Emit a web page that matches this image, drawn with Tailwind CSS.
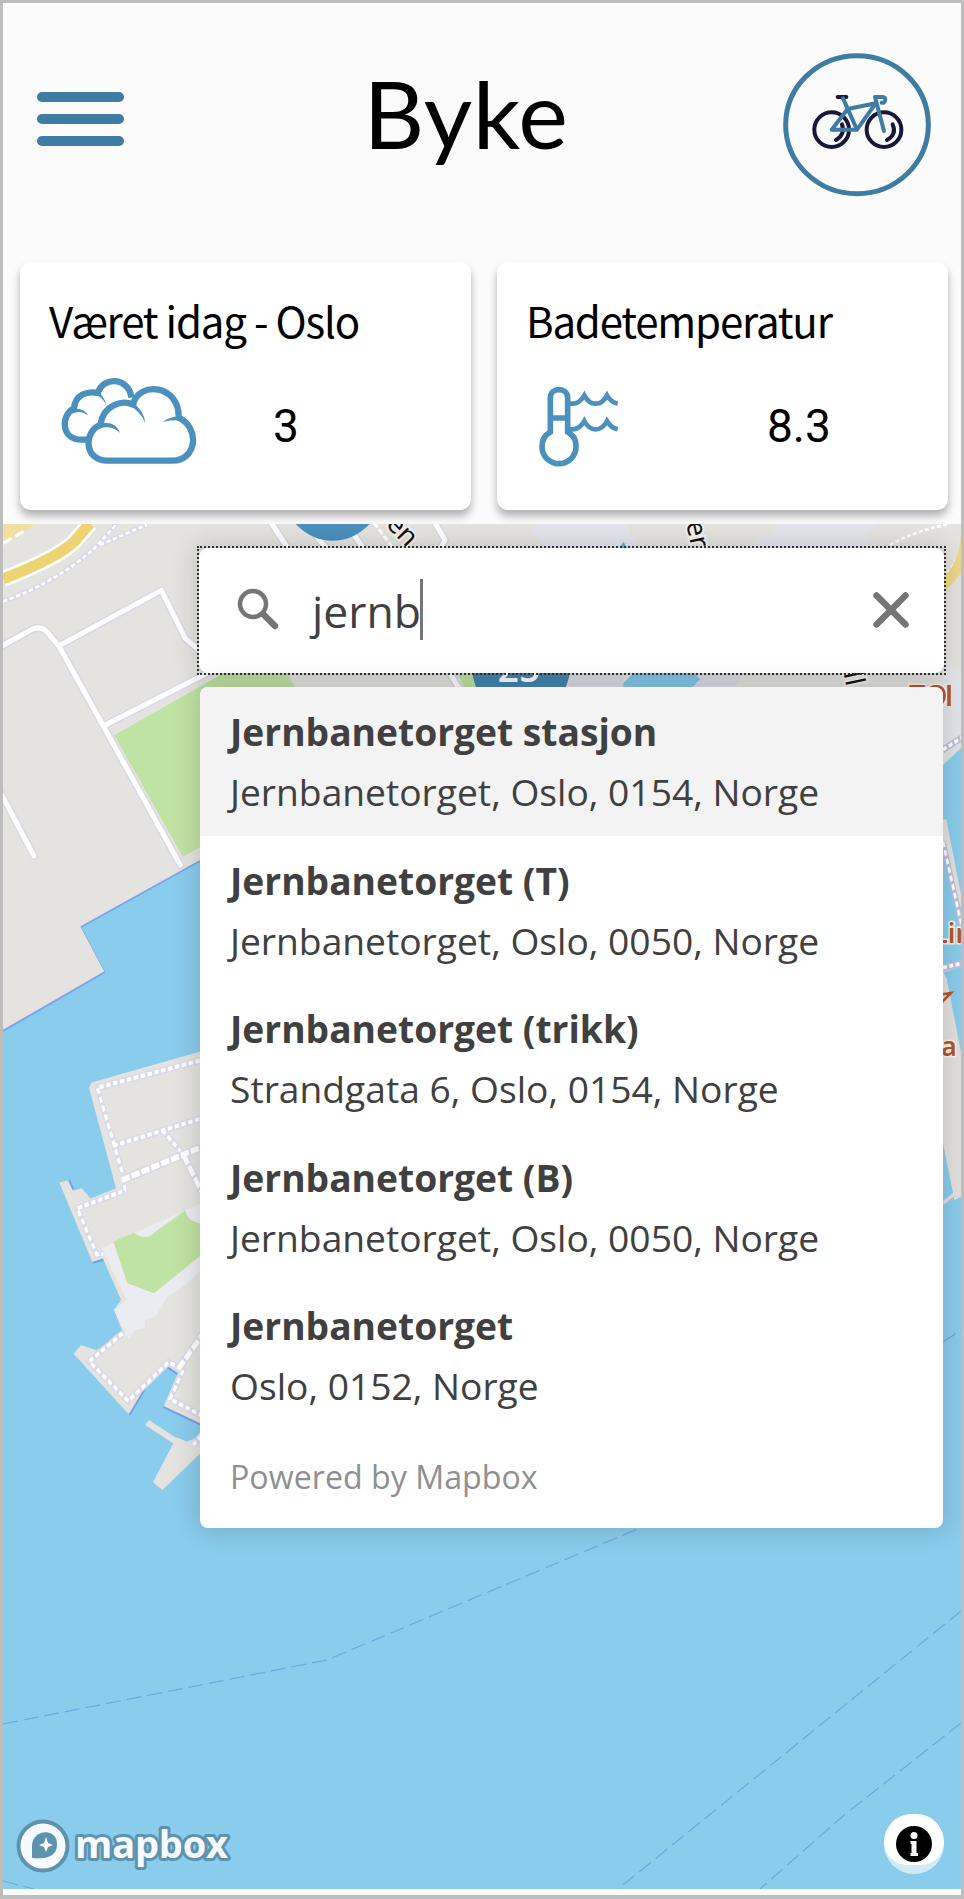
<!DOCTYPE html>
<html lang="no">
<head>
<meta charset="utf-8">
<title>Byke</title>
<script src="https://cdn.jsdelivr.net/npm/@tailwindcss/browser@4"></script>
</head>
<body class="bg-[#bdbdbd]">
<main class="flex h-[1899px] w-[964px] flex-col border-x-[3px] border-t-[3px] border-b-4 border-[#bdbdbd] bg-[#fbfbfb] text-black">
  <header class="flex h-[259px] shrink-0 items-start justify-between pl-[34px] pr-[29px]">
    <button class="mt-[89px] flex w-[87px] flex-col gap-[12px]" aria-label="Meny">
      <span class="h-[10px] w-full rounded-full bg-[#3e7ca3]"></span>
      <span class="h-[10px] w-full rounded-full bg-[#3e7ca3]"></span>
      <span class="h-[10px] w-full rounded-full bg-[#3e7ca3]"></span>
    </button>
    <h1 class="mt-[50px] ml-[26px] font-[Lato] text-[94px] leading-[120px] tracking-[0.5px]">Byke</h1>
    <svg class="mt-[49px] h-[146px] w-[150px]" viewBox="125 95 450 438" fill="none" stroke-linecap="round" stroke-linejoin="round">
      <ellipse cx="350" cy="313" rx="214" ry="207" stroke="#3e7ca3" stroke-width="15"/>
      <g stroke="#17173a" stroke-width="12">
        <circle cx="274" cy="328" r="52"/><circle cx="431" cy="328" r="52"/>
        <path d="M305 312Q315 342 287 359M457 312Q470 342 440 359"/>
        <path d="M292 230H318"/>
      </g>
      <g stroke="#3e7ca3" stroke-width="12">
        <path d="M308 234L350 328H274L322 266L406 249L350 328M431 332L404 230H426Q438 230 434 242Q432 248 424 247"/>
      </g>
    </svg>
  </header>

  <section class="flex h-[262px] shrink-0 gap-[26px] pr-[13px] pl-[17px]">
    <article class="h-[248px] flex-1 rounded-[11px] bg-white pl-[29px] shadow-[0_6px_9px_rgba(0,0,0,0.3)]">
      <h2 class="mt-[28px] font-['Noto_Sans_CJK_JP'] text-[42px] leading-[60px] tracking-[-1.2px] whitespace-nowrap">Været idag - Oslo</h2>
      <div class="mt-[26px] flex">
        <svg class="ml-[12px] h-[90px] w-[136px]" viewBox="180 375 408 270" fill="none" stroke="#4b91bd" stroke-width="19" stroke-linejoin="round">
          <path d="M262 566H243C176 566 181 490 219 472C223 430 259 419 291 426C306 373 385 380 391 440"/>
          <path d="M320 629C247 629 248 540 298 522C307 460 366 446 396 461C413 388 536 401 533 500C598 530 588 629 514 629Z"/>
          <g fill="#4b91bd" stroke="none">
            <path d="M284 417Q309 432 316 462Q300 432 280 431ZM217 474Q249 470 261 494Q239 475 214 488ZM300 516Q345 509 357 546Q331 520 294 533ZM393 454Q430 477 433 518Q419 479 383 463ZM540 496Q502 498 485 513Q515 505 543 510Z"/>
          </g>
        </svg>
        <span class="mt-[20px] ml-[76px] font-[Roboto] text-[46px] leading-[60px]">3</span>
      </div>
    </article>
    <article class="h-[248px] flex-1 rounded-[11px] bg-white pl-[29px] shadow-[0_6px_9px_rgba(0,0,0,0.3)]">
      <h2 class="mt-[28px] font-['Noto_Sans_CJK_JP'] text-[42px] leading-[60px] tracking-[-1.2px] whitespace-nowrap">Badetemperatur</h2>
      <div class="mt-[26px] flex">
        <svg class="mt-[8px] ml-[11px] h-[84px] w-[82px]" viewBox="170 402 246 252" fill="none" stroke="#4b91bd" stroke-width="17">
          <path d="M210 546V443C210 411 262 411 262 443V546C286 560 287 576 287 590A51 51 0 0 1 185 590C185 570 192 556 210 546ZM210 504H262"/>
          <path d="M264 461H276Q298 461 312 436Q325 461 346 461Q367 461 380 436Q392 457 412 461M264 538H276Q298 538 312 513Q325 538 346 538Q367 538 380 513Q392 534 412 538" stroke-width="14"/>
        </svg>
        <span class="mt-[20px] ml-[148px] font-[Roboto] text-[46px] leading-[60px]">8.3</span>
      </div>
    </article>
  </section>

  <section class="relative h-[1365px] shrink-0 overflow-hidden bg-[#8accec]">
    <svg class="absolute inset-0 h-full w-full" viewBox="3 524 958 1365" fill="none">
      <!-- northern land -->
      <path d="M3 524H961V748L943 765V700H300V820L200 861L81 927L105 972L3 1031Z" fill="#e4e3df"/>
      <path d="M200 861L81 927M105 972L3 1031" stroke="#7aa5ec" stroke-width="2"/>
      <path d="M81 927L105 972" stroke="#8aaeeb" stroke-width="1"/>
      <g transform="translate(0 510) scale(.33333)">
        <path d="M343 676L670 490H862L900 560L600 1012L548 1040Z" fill="#bfe3a3"/>
        <path d="M9 42H104L60 75L9 100Z" fill="#f0dfa0"/>
        <path d="M9 100L70 65" stroke="#fff" stroke-width="9" stroke-dasharray="30 12"/>
        <path d="M9 207Q180 140 225 92L270 40" stroke="#fff" stroke-width="48"/>
        <path d="M9 207Q180 140 225 92L270 40" stroke="#edd374" stroke-width="33"/>
        <path d="M9 275Q170 215 280 118L350 42M300 105L440 44" stroke="#d9d9e8" stroke-width="15"/>
        <path d="M9 275Q170 215 280 118L350 42M300 105L440 44" stroke="#fff" stroke-width="8" stroke-dasharray="13 8"/>
        <g stroke-linejoin="round" stroke-linecap="round">
          <path d="M0 411L96 358Q125 345 145 370L178 410L310 648L541 1065M178 407L484 241L556 385L620 440M310 648L640 480M0 845L102 1038M808 30L870 125M1045 50L1090 115M1300 30L1335 90L1325 110M950 80L975 110M1350 490L1380 540" stroke="#d8d8e7" stroke-width="24"/>
          <path d="M0 411L96 358Q125 345 145 370L178 410L310 648L541 1065M178 407L484 241L556 385L620 440M310 648L640 480M0 845L102 1038M808 30L870 125M1045 50L1090 115M1300 30L1335 90L1325 110M950 80L975 110M1350 490L1380 540" stroke="#fff" stroke-width="15"/>
          <path d="M1125 42L1180 115" stroke="#fff" stroke-width="9" stroke-dasharray="10 14"/>
        </g>
        <circle cx="998" cy="-55" r="147" fill="#4b90bd"/>
        <path d="M1372 490H1440V535H1395Z" fill="#bfe3a3"/>
        <!-- squares and blocks in the centre -->
        <g transform="translate(1470 0)">
          <path d="M150 42H410L440 115H170L117 62ZM870 42H1160L1128 78L1160 115H770ZM1370 460L1422 500V680L1360 720V490Z" fill="#e4e5ec"/>
          <path d="M1200 105Q1280 60 1380 42M1422 95Q1405 150 1365 200" stroke="#fff" stroke-width="8" stroke-dasharray="12 7"/>
          <path d="M1428 80Q1422 175 1358 225" stroke="#edd98c" stroke-width="32"/>
          <path d="M400 95L412 115H388Z" fill="#62b5dd"/>
          <path d="M240 490H400V535H235ZM630 490H760L735 535H610Z" fill="#dcdde5"/>
          <path d="M430 490H615L630 508L605 535H400V520Z" fill="#84c8e9"/>
        </g>
      </g>
      <circle cx="521" cy="667" r="49" fill="#4386b2"/>
      <text x="519" y="682" text-anchor="middle" font-family="Open Sans" font-weight="600" font-size="37" fill="#fff">25</text>
      <g font-family="Noto Sans" font-size="27" fill="#111" stroke="#f5f2ec" stroke-width="4" paint-order="stroke">
        <text transform="translate(385 525) rotate(46)">en</text>
        <text transform="translate(686 523) rotate(78)">er</text>
        <text transform="translate(840 657) rotate(78)">ull</text>
      </g>
      <g font-family="Noto Sans" font-size="29" font-weight="500" fill="#b4572b" stroke="#f8f6f1" stroke-width="3" paint-order="stroke">
        <text x="909" y="706">TO</text><path d="M949 685V706" stroke="#b4572b" stroke-width="3.5"/>
      </g>
      <!-- eastern piers -->
      <g transform="translate(900 660) scale(.33333 .47187)">
        <path d="M129 338H139L184 500V530L129 385ZM129 648L184 636V650L129 662ZM129 660L140 675L184 835V1137L163 1145L160 1132L129 1024Z" fill="#e2e1dd"/>
        <path d="M129 190L184 165M129 385L184 560M129 652L184 643" stroke="#bebfdc" stroke-width="15"/>
        <path d="M129 190L184 165M129 385L184 560M129 652L184 643" stroke="#fff" stroke-width="8" stroke-dasharray="12 7"/>
        <path d="M163 1132L129 1151" stroke="#e2e1dd" stroke-width="8"/>
      </g>
      <g font-family="Noto Sans" font-size="27" font-weight="600" fill="#b4572b" stroke="#f8f6f1" stroke-width="3" paint-order="stroke">
        <text x="933" y="943">Lin</text><text x="941" y="1056">a</text>
        <path d="M937 995L951 993L939 1005" fill="none" stroke="#b4572b" stroke-width="2.5"/>
      </g>
      <!-- western peninsula -->
      <g transform="translate(0 840) scale(.33333 .44643)">
        <path d="M620 470L275 543L267 555L348 780L272 803L245 780L222 785L207 762L178 767L278 947L310 940L363 1030L342 1053L370 1105L290 1143L243 1131L221 1151L388 1288L440 1220L500 1180L533 1195L490 1270L620 1316Z" fill="#e4e3df"/>
        <path d="M435 1310L447 1299L525 1338L538 1340L560 1348L620 1330V1360L487 1456L459 1438L520 1352Z" fill="#e4e3df"/>
        <path d="M338 902L305 915L380 1030L342 1053L385 1118L405 1098L435 1093L434 1078L468 1066L500 1025L550 1000L620 952V810L555 830L450 865Z" fill="#ebecf1"/>
        <path d="M340 900L400 880Q440 900 465 878L555 830Q565 860 620 860V920L462 1015L382 993Z" fill="#bfe3a3"/>
        <path d="M207 762L220 783M278 947L310 940M388 1288L435 1230M500 1180L532 1196M490 1270L620 1316" stroke="#70a0e6" stroke-width="5"/>
        <path d="M620 490L292 555L373 760L375 785L232 825L290 928L310 928M340 685L620 620M487 650L550 705M368 1105L268 1168L385 1257L505 1170L550 1187L510 1252L620 1295M620 1320L580 1355" stroke="#dadae8" stroke-width="16"/>
        <path d="M620 490L292 555L373 760L375 785L232 825L290 928L310 928M340 685L620 620M487 650L550 705M368 1105L268 1168L385 1257L505 1170L550 1187L510 1252L620 1295M620 1320L580 1355" stroke="#fff" stroke-width="9" stroke-dasharray="13 8"/>
        <path d="M365 762L620 683M550 705L610 795M535 1185L620 1095" stroke="#d9d9e8" stroke-width="20"/>
        <path d="M365 762L620 683M550 705L610 795M535 1185L620 1095" stroke="#fff" stroke-width="13" stroke-dasharray="25 6"/>
      </g>
      <path d="M3 1724L327 1660L640 1528M961 1611L618 1889M961 1723L843 1816L760 1889M3 1881L34 1889M943 1342L961 1330" stroke="#6fa6df" stroke-width="1.2" stroke-dasharray="15 6"/>
    </svg>

    <div class="relative ml-[194px] mt-[22px] w-[749px]">
      <div class="h-[129px] border-[2px] border-dotted border-[#333]">
        <div class="flex h-full items-center rounded-[9px] bg-white shadow-[0_0_24px_5px_rgba(0,0,0,0.13)]">
          <svg class="mt-[-3px] ml-[38px] h-[42px] w-[42px]" viewBox="0 0 42 42" fill="none" stroke="#757575" stroke-linecap="round"><circle cx="16" cy="16" r="13" stroke-width="4.5"/><path d="M26 26L38 38" stroke-width="6.5"/></svg>
          <span class="ml-[33px] font-['Open_Sans'] text-[44.5px] leading-[60px] text-[#404040]">jernb</span>
          <span class="mt-[-2px] ml-[-1px] h-[61px] w-[3px] bg-[#757575]"></span>
          <svg class="mr-[35px] mb-[2px] ml-auto h-[36px] w-[36px]" viewBox="0 0 36 36" fill="none" stroke="#757575" stroke-width="6.5" stroke-linecap="round"><path d="M3.5 3.5L32.5 32.5M32.5 3.5L3.5 32.5"/></svg>
        </div>
      </div>
      <div class="mt-[12px] ml-[3px] h-[841px] w-[743px] overflow-hidden rounded-[8px] bg-white font-['Open_Sans'] text-[37.2px] text-[#404040] shadow-[0_0_24px_5px_rgba(0,0,0,0.13)]">
        <ul class="leading-[60px] whitespace-nowrap">
          <li class="h-[148.6px] bg-[#f3f3f3] px-[30px] pt-[15px]"><div class="font-bold">Jernbanetorget stasjon</div><div>Jernbanetorget, Oslo, 0154, Norge</div></li>
          <li class="h-[148.6px] px-[30px] pt-[15px]"><div class="font-bold">Jernbanetorget (T)</div><div>Jernbanetorget, Oslo, 0050, Norge</div></li>
          <li class="h-[148.6px] px-[30px] pt-[15px]"><div class="font-bold">Jernbanetorget (trikk)</div><div>Strandgata 6, Oslo, 0154, Norge</div></li>
          <li class="h-[148.6px] px-[30px] pt-[15px]"><div class="font-bold">Jernbanetorget (B)</div><div>Jernbanetorget, Oslo, 0050, Norge</div></li>
          <li class="h-[148.6px] px-[30px] pt-[15px]"><div class="font-bold">Jernbanetorget</div><div>Oslo, 0152, Norge</div></li>
        </ul>
        <p class="mt-[17px] px-[30px] text-[32.2px] leading-[60px] text-[#909090]">Powered by Mapbox</p>
      </div>
    </div>

    <div class="absolute bottom-[15px] left-[12px] flex">
      <svg class="h-[56px] w-[222px]" viewBox="15 1817 222 56">
        <circle cx="43" cy="1845" r="24.5" fill="#f4faff" stroke="#5f93ad" stroke-width="4"/>
        <path d="M32 1857V1845C32 1828 57 1826 57 1843C57 1857 44 1858 32 1857Z" fill="#5d93ad"/>
        <path d="M46 1836L48 1842L53 1844L48 1846L46 1851L44 1846L39 1844L44 1842Z" fill="#fff"/>
        <text x="75" y="1857" textLength="153" font-family="Open Sans" font-weight="700" font-size="38" fill="#f4faff" stroke="#5f93ad" stroke-width="6" stroke-linejoin="round" paint-order="stroke">mapbox</text>
      </svg>
    </div>
    <div class="absolute right-[17px] bottom-[15px] flex h-[60px] w-[60px] rounded-full bg-white/60">
      <div class="flex h-[51px] w-[60px] items-center justify-center rounded-t-[30px] rounded-b-[25px] bg-white">
        <svg class="mt-[9px] h-[36px] w-[36px]" viewBox="0 0 36 36"><circle cx="18" cy="18" r="18"/><circle cx="18" cy="9.5" r="3.5" fill="#fff"/><path d="M14.5 15H20.5V27H22V30H14.5V27H15.5V18H14.5Z" fill="#fff"/></svg>
      </div>
    </div>
  </section>
</main>
</body>
</html>
